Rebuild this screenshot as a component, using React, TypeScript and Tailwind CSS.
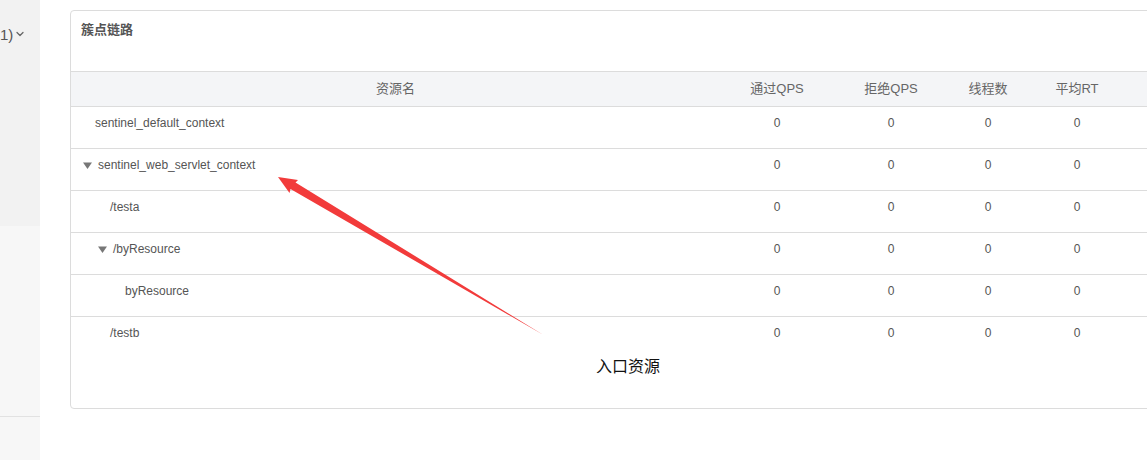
import { ChevronDown } from 'lucide-react';

const rows = [
  { name: 'sentinel_default_context', indent: 'pl-[24px]', caret: false },
  { name: 'sentinel_web_servlet_context', indent: 'pl-[12px]', caret: true },
  { name: '/testa', indent: 'pl-[39px]', caret: false },
  { name: '/byResource', indent: 'pl-[27px]', caret: true },
  { name: 'byResource', indent: 'pl-[54px]', caret: false },
  { name: '/testb', indent: 'pl-[39px]', caret: false },
];

const Caret = () => (
  <svg width="9" height="7" viewBox="0 0 9 7" className="mr-[6px] shrink-0">
    <path d="M0 0.5 L9 0.5 L4.5 7 Z" fill="#777" />
  </svg>
);

export default function App() {
  return (
    <div
      className="relative flex h-[460px] w-[1147px] overflow-hidden bg-white text-[#555]"
      style={{ fontFamily: '"Liberation Sans", Arial, "Noto Sans CJK SC", sans-serif' }}
    >
      {/* Left sidebar strip */}
      <div className="flex w-[40px] shrink-0 flex-col">
        <div className="h-[226px] bg-[#f2f2f2] pt-[24px]">
          <div className="flex items-center text-[15px] text-[#555]">
            <span>1)</span>
            <ChevronDown size={12} strokeWidth={2.5} className="ml-[1px] -mt-[3px] text-[#666]" />
          </div>
        </div>
        <div className="h-[191px] border-b border-[#e2e2e2] bg-[#f7f7f7]" />
        <div className="flex-1 bg-[#f7f7f7]" />
      </div>

      {/* Main area */}
      <div className="pl-[30px] pt-[10px]">
        <div className="h-[399px] w-[1140px] rounded-[4px] border border-[#dcdcdc] bg-white">
          <div className="h-[60px] px-[10px] pt-[9px] text-[13px] font-bold text-[#555]">簇点链路</div>

          <div className="flex h-[36px] items-center border-y border-[#dcdcdc] bg-[#f4f5f7] text-[13px] text-[#666]">
            <div className="w-[649px] text-center">资源名</div>
            <div className="w-[114px] text-center">通过QPS</div>
            <div className="w-[114px] text-center">拒绝QPS</div>
            <div className="w-[80px] text-center">线程数</div>
            <div className="w-[98px] text-center">平均RT</div>
          </div>

          <div className="divide-y divide-[#dcdcdc] text-[12px]">
            {rows.map((r) => (
              <div key={r.name} className="flex h-[42px] items-start pt-[7px]">
                <div className={`flex w-[649px] items-center ${r.indent}`}>
                  {r.caret && <Caret />}
                  <span>{r.name}</span>
                </div>
                <div className="w-[114px] text-center">0</div>
                <div className="w-[114px] text-center">0</div>
                <div className="w-[80px] text-center">0</div>
                <div className="w-[98px] text-center">0</div>
              </div>
            ))}
          </div>
        </div>
      </div>

      {/* Annotation arrow */}
      <svg className="pointer-events-none absolute left-0 top-0" width="1147" height="460">
        <path
          d="M278 177 L298 180 L295.5 182.5 L543.5 335 L290.5 189 L289.5 193 Z"
          fill="#f23b3b"
        />
      </svg>
      <div
        className="absolute left-[596px] top-[353px] text-[16px] text-[#111]"
        style={{ fontFamily: '"Noto Sans CJK SC", sans-serif' }}
      >
        入口资源
      </div>
    </div>
  );
}
